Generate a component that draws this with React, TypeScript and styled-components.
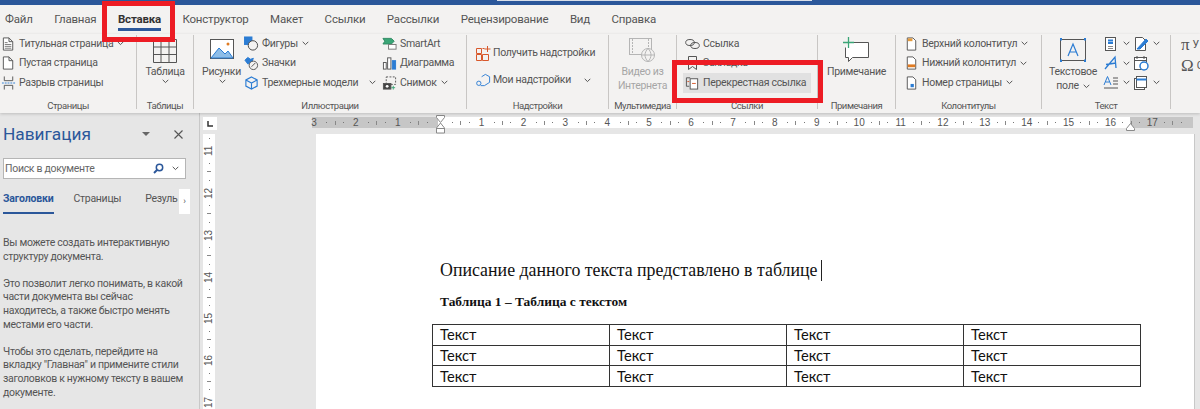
import React from "react";
import styled, { createGlobalStyle } from "styled-components";

const Global = createGlobalStyle`
  html, body { margin: 0; padding: 0; background: #e6e6e6; }
  * { box-sizing: border-box; }
`;

const UI_FONT = `Roboto, "Open Sans", sans-serif`;

const Chevron = () => (
  <ChevronSvg viewBox="0 0 7 5" width="7" height="5">
    <polyline points="0.7,0.8 3.5,3.6 6.3,0.8" fill="none" stroke="#555" strokeWidth="1" />
  </ChevronSvg>
);

type IconProps = { w?: number; h?: number; children: React.ReactNode };
const Icon = ({ w = 16, h = 16, children }: IconProps) => (
  <svg width={w} height={h} viewBox={`0 0 ${w} ${h}`} fill="none" stroke="#555" strokeWidth="1">
    {children}
  </svg>
);

const DocOutline = () => <path d="M2.5 1.5h6l4 4v9h-10z M8.5 1.5v4h4" fill="#fff" />;

const TitlePageIcon = () => (
  <Icon>
    <DocOutline />
    <path d="M4 6.5h3M4 8.5h7M4 10.5h7M4 12.5h7" stroke="#777" />
  </Icon>
);
const BlankPageIcon = () => (
  <Icon>
    <DocOutline />
  </Icon>
);
const PageBreakIcon = () => (
  <Icon>
    <path d="M3.5 1v4.5h9V1M3.5 15v-4.5h9V15" />
    <path d="M1 8h14" stroke="#2b7cd3" strokeDasharray="2 1" />
  </Icon>
);
const ShapesIcon = () => (
  <Icon>
    <rect x="0.5" y="0.5" width="8" height="8" fill="#2b7cd3" stroke="#2b7cd3" />
    <circle cx="9.5" cy="9.5" r="5" fill="#f3f2f1" stroke="#444" />
  </Icon>
);
const SymbolsIcon = () => (
  <Icon>
    <path d="M1 5l3-3 3 2 3-1-2 5-4 1z" fill="#2b7cd3" stroke="#2b7cd3" />
    <circle cx="10" cy="10.5" r="4.5" fill="#f3f2f1" />
    <path d="M8 12l4-4" />
  </Icon>
);
const CubeIcon = () => (
  <Icon>
    <path d="M8 1.5l6 3.2v6.6l-6 3.2-6-3.2V4.700z M2 4.700l6 3.300 6-3.300M8 8v6.500" stroke="#2b7cd3" strokeWidth="1.200" />
  </Icon>
);
const SmartArtIcon = () => (
  <Icon>
    <path d="M1 2h9l3 3-3 3H1l2-3z" fill="#3aa576" stroke="#2f8a62" />
    <rect x="7" y="8.500" width="8" height="5" fill="#fff" stroke="#777" />
  </Icon>
);
const ChartIcon = () => (
  <Icon>
    <rect x="1.500" y="7.500" width="3" height="7" fill="#fff" />
    <rect x="6" y="2.500" width="3.500" height="12" fill="#fff" />
    <rect x="11" y="5.500" width="3.500" height="9" fill="#2b7cd3" stroke="#2b7cd3" />
  </Icon>
);
const ScreenshotIcon = () => (
  <Icon>
    <rect x="4.500" y="1.500" width="10" height="8" strokeDasharray="2 1.500" />
    <rect x="1.500" y="8.500" width="8" height="6" fill="#444" />
    <circle cx="5.500" cy="11.500" r="1.500" fill="#fff" stroke="none" />
    <path d="M12 11v4M10 13h4" stroke="#3aa576" />
  </Icon>
);
const StoreIcon = () => (
  <Icon w={15} h={16}>
    <path d="M.5 3.500h5v5h-5zM.5 9.500h5v6h-5zM6.500 9.500h6v6h-6zM6.500 3.500h2" stroke="#d8582b" />
    <path d="M11.500 1v6M8.500 4h6" stroke="#d8582b" />
  </Icon>
);
const MyAddinsIcon = () => (
  <Icon w={16} h={14}>
    <path d="M6 3.500L10 1l4.500 2.500v6L9 13H5" stroke="#2b7cd3" />
    <circle cx="3" cy="10.500" r="2.300" stroke="#2b7cd3" />
  </Icon>
);
const LinkIcon = () => (
  <Icon w={15} h={12}>
    <ellipse cx="5" cy="4.500" rx="4.300" ry="3" />
    <ellipse cx="10" cy="7.500" rx="4.300" ry="3" />
  </Icon>
);
const BookmarkIcon = () => (
  <Icon w={15} h={16}>
    <path d="M3.500 1.500h8v13l-4-3-4 3z" />
  </Icon>
);
const CrossRefIcon = () => (
  <Icon w={16} h={15}>
    <path d="M5.500 2.500h-4v9h3" />
    <rect x="5.500" y="3.500" width="8" height="11" fill="#fff" />
    <path d="M7.500 8.500h4" stroke="#d8582b" />
    <path d="M2.500 6.500h2" stroke="#d8582b" />
  </Icon>
);
const HeaderIcon = () => (
  <Icon>
    <path d="M3.500 1.500h6l3 3v10h-9z" fill="#fff" />
    <rect x="4" y="2" width="5" height="3" fill="#e59b3c" stroke="none" />
  </Icon>
);
const FooterIcon = () => (
  <Icon>
    <path d="M3.500 1.500h6l3 3v10h-9z" fill="#fff" />
    <rect x="4" y="9.500" width="8" height="3" fill="#e07b22" stroke="none" />
  </Icon>
);
const PageNumberIcon = () => (
  <Icon>
    <path d="M3.500 1.500h6l3 3v10h-9z" fill="#fff" />
    <rect x="7" y="9" width="3.500" height="3.500" fill="#2b7cd3" stroke="none" />
  </Icon>
);
const QuickPartsIcon = () => (
  <Icon>
    <rect x="2.500" y="1.500" width="10" height="13" fill="#fff" />
    <path d="M5 4.500h5M5 7h5" stroke="#2b7cd3" strokeWidth="2" />
    <path d="M5 10.500h5M5 12.500h5" stroke="#888" />
  </Icon>
);
const SignatureIcon = () => (
  <Icon>
    <path d="M2.500 1.500h7l3 3v10h-10z" fill="#fff" />
    <path d="M4 13L13 3l2 2-8 8z" fill="#2b7cd3" stroke="#2b7cd3" />
  </Icon>
);
const WordArtIcon = () => (
  <Icon>
    <path d="M2 14L12 2l1 11M3 9.500l10-1.500" stroke="#2b7cd3" strokeWidth="1.300" />
  </Icon>
);
const DateIcon = () => (
  <Icon>
    <rect x="1.500" y="2.500" width="12" height="12" fill="#fff" />
    <path d="M1.500 5.500h12M4 1v3M11 1v3" />
    <circle cx="11" cy="11" r="4" fill="#fff" stroke="#2b7cd3" strokeWidth="1.500" />
  </Icon>
);
const DropCapIcon = () => (
  <Icon w={16} h={15}>
    <path d="M1 10L4.500 1.500 8 10M2.500 7h4" stroke="#2b7cd3" />
    <path d="M10 3h5M10 6h5M10 9h5M1 13h14" />
  </Icon>
);
const ObjectIcon = () => (
  <Icon>
    <rect x="1.500" y="3.500" width="10" height="11" fill="#fff" />
    <rect x="3.500" y="1.500" width="10" height="11" fill="#fff" />
    <path d="M3.500 4.500h10" stroke="#2b7cd3" strokeWidth="2" />
  </Icon>
);

type Item = { icon?: React.ReactNode; text: string; chevron?: boolean };

const Rows = ({ items }: { items: Item[] }) => (
  <RowStack>
    {items.map((item) => (
      <Row key={item.text}>
        <IconSlot>{item.icon}</IconSlot>
        <RibbonText>{item.text}</RibbonText>
        {item.chevron && <Chevron />}
      </Row>
    ))}
  </RowStack>
);

const tabs = ["Файл", "Главная", "Вставка", "Конструктор", "Макет", "Ссылки", "Рассылки", "Рецензирование", "Вид", "Справка"];
const rulerNumbers = ["3", "2", "1", "", "1", "2", "3", "4", "5", "6", "7", "8", "9", "10", "11", "12", "13", "14", "15", "16", "17", ""];
const sideNumbers = ["10", "11", "12", "13", "14", "15", "16", "17"];
const tableRows = [0, 1, 2];
const tableCols = [0, 1, 2, 3];

export default function App() {
  return (
    <Screen>
      <Global />
      <TitleStrip>
        <SearchEdge />
      </TitleStrip>
      <TabBar>
        {tabs.map((tab) => (
          <Tab key={tab} $active={tab === "Вставка"}>
            {tab}
          </Tab>
        ))}
      </TabBar>
      <Ribbon>
        <Group $width={136}>
          <GroupBody $pad={1}>
            <Rows
              items={[
                { icon: <TitlePageIcon />, text: "Титульная страница", chevron: true },
                { icon: <BlankPageIcon />, text: "Пустая страница" },
                { icon: <PageBreakIcon />, text: "Разрыв страницы" },
              ]}
            />
          </GroupBody>
          <GroupLabel>Страницы</GroupLabel>
        </Group>
        <Sep />
        <Group $width={56}>
          <GroupBody>
            <BigButton>
              <BigIcon>
                <Icon w={24} h={26}>
                  <path d="M.5 2.500h23v23H.5zM.5 10h23M.5 17.500h23M8 2.500v23M16 2.500v23" />
                </Icon>
              </BigIcon>
              <RibbonText>Таблица</RibbonText>
              <Chevron />
            </BigButton>
          </GroupBody>
          <GroupLabel>Таблицы</GroupLabel>
        </Group>
        <Sep />
        <Group $width={272}>
          <GroupBody $pad={6}>
            <BigButton $width={43}>
              <BigIcon>
                <Icon w={24} h={22}>
                  <rect x=".5" y=".5" width="23" height="19" fill="#fff" />
                  <path d="M1 19l8-10 6 6 3-3 5 7z" fill="#8dbde8" stroke="#2b7cd3" />
                  <circle cx="18" cy="5" r="1.500" fill="#e07b22" stroke="none" />
                </Icon>
              </BigIcon>
              <RibbonText>Рисунки</RibbonText>
              <Chevron />
            </BigButton>
            <ColumnGap $width={1} />
            <ShapesColumn>
              <Rows
                items={[
                  { icon: <ShapesIcon />, text: "Фигуры", chevron: true },
                  { icon: <SymbolsIcon />, text: "Значки" },
                  { icon: <CubeIcon />, text: "Трехмерные модели" },
                ]}
              />
              <TrailingChevron>
                <Chevron />
              </TrailingChevron>
            </ShapesColumn>
            <ColumnGap $width={6} />
            <Rows
              items={[
                { icon: <SmartArtIcon />, text: "SmartArt" },
                { icon: <ChartIcon />, text: "Диаграмма" },
                { icon: <ScreenshotIcon />, text: "Снимок", chevron: true },
              ]}
            />
          </GroupBody>
          <GroupLabel>Иллюстрации</GroupLabel>
        </Group>
        <Sep />
        <Group $width={141}>
          <AddinsBody>
            <AddinRow>
              <IconSlot>
                <StoreIcon />
              </IconSlot>
              <RibbonText>Получить надстройки</RibbonText>
            </AddinRow>
            <AddinRow>
              <IconSlot>
                <MyAddinsIcon />
              </IconSlot>
              <RibbonText>Мои надстройки</RibbonText>
              <AddinChevron>
                <Chevron />
              </AddinChevron>
            </AddinRow>
          </AddinsBody>
          <GroupLabel>Надстройки</GroupLabel>
        </Group>
        <Sep />
        <Group $width={67}>
          <GroupBody>
            <BigButton>
              <BigIcon>
                <svg width="26" height="24" viewBox="0 0 26 24" fill="none" stroke="#b5b5b5">
                  <rect x=".5" y=".5" width="22" height="16" />
                  <path d="M3.500 1v15M19.500 1v15" strokeDasharray="2 1" />
                  <circle cx="19" cy="17" r="6.500" fill="#f3f2f1" />
                  <path d="M12.500 17h13M19 10.500c-4 4-4 9 0 13M19 10.500c4 4 4 9 0 13" />
                </svg>
              </BigIcon>
              <MutedText>
                Видео из
                <br />
                Интернета
              </MutedText>
            </BigButton>
          </GroupBody>
          <GroupLabel>Мультимедиа</GroupLabel>
        </Group>
        <Sep />
        <Group $width={140}>
          <GroupBody $pad={8}>
            <RowStack>
              <Row>
                <IconSlot>
                  <LinkIcon />
                </IconSlot>
                <RibbonText>Ссылка</RibbonText>
              </Row>
              <Row>
                <IconSlot>
                  <BookmarkIcon />
                </IconSlot>
                <RibbonText>Закладка</RibbonText>
              </Row>
              <ActiveRow>
                <IconSlot>
                  <CrossRefIcon />
                </IconSlot>
                <RibbonText>Перекрестная ссылка</RibbonText>
              </ActiveRow>
            </RowStack>
          </GroupBody>
          <GroupLabel>Ссылки</GroupLabel>
        </Group>
        <Sep />
        <Group $width={77}>
          <GroupBody>
            <BigButton>
              <BigIcon>
                <Icon w={28} h={26}>
                  <path d="M6.500 5.500h20v15h-16l-4 4v-4h-3v-10" fill="#fff" stroke="#555" />
                  <path d="M1 5.500h11M6.500 0v11" stroke="#3aa576" strokeWidth="1.300" />
                </Icon>
              </BigIcon>
              <RibbonText>Примечание</RibbonText>
            </BigButton>
          </GroupBody>
          <GroupLabel>Примечания</GroupLabel>
        </Group>
        <Sep />
        <Group $width={145}>
          <GroupBody $pad={8}>
            <Rows
              items={[
                { icon: <HeaderIcon />, text: "Верхний колонтитул", chevron: true },
                { icon: <FooterIcon />, text: "Нижний колонтитул", chevron: true },
                { icon: <PageNumberIcon />, text: "Номер страницы", chevron: true },
              ]}
            />
          </GroupBody>
          <GroupLabel>Колонтитулы</GroupLabel>
        </Group>
        <Sep />
        <Group $width={128}>
          <GroupBody $pad={7}>
            <BigButton $width={48}>
              <BigIcon>
                <svg width="28" height="24" viewBox="0 0 28 24" fill="none">
                  <rect x="1.500" y="1.500" width="25" height="21" stroke="#555" />
                  <path d="M1 1h2M25 1h2M1 23h2M25 23h2" stroke="#2b7cd3" strokeWidth="3" />
                  <path d="M9 18L14 6l5 12M11 14h6" stroke="#2b7cd3" strokeWidth="1.200" />
                </svg>
              </BigIcon>
              <RibbonText>Текстовое</RibbonText>
              <Row $tight>
                <RibbonText>поле</RibbonText>
                <Chevron />
              </Row>
            </BigButton>
            <ColumnGap $width={6} />
            <SmallGrid>
              <GridCell><QuickPartsIcon /><Chevron /></GridCell>
              <GridCell><SignatureIcon /><Chevron /></GridCell>
              <GridCell><WordArtIcon /><Chevron /></GridCell>
              <GridCell><DateIcon /></GridCell>
              <GridCell><DropCapIcon /><Chevron /></GridCell>
              <GridCell><ObjectIcon /><Chevron /></GridCell>
            </SmallGrid>
          </GroupBody>
          <GroupLabel>Текст</GroupLabel>
        </Group>
        <Sep />
        <SymbolsGroup>
          <SymbolRow><SymbolGlyph>π</SymbolGlyph><RibbonText>У</RibbonText></SymbolRow>
          <SymbolRow><SymbolGlyph>Ω</SymbolGlyph><RibbonText>С</RibbonText></SymbolRow>
        </SymbolsGroup>
      </Ribbon>

      <Workspace>
        <NavPanel>
          <NavHead>
            <NavTitle>Навигация</NavTitle>
            <NavCaret />
            <NavClose viewBox="0 0 9 9" width="9" height="9">
              <path d="M.5.500l8 8M8.500.500l-8 8" stroke="#555" strokeWidth="1.100" />
            </NavClose>
          </NavHead>
          <SearchBox>
            <SearchHint>Поиск в документе</SearchHint>
            <svg width="11" height="11" viewBox="0 0 11 11" fill="none" stroke="#2b579a" strokeWidth="1.500">
              <circle cx="6.500" cy="4.500" r="3.200" />
              <path d="M4 7l-3 3" strokeWidth="2" />
            </svg>
            <SearchChevron>
              <Chevron />
            </SearchChevron>
          </SearchBox>
          <NavTabs>
            <NavTab $active>Заголовки</NavTab>
            <NavTab>Страницы</NavTab>
            <NavTabClipped>Резуль</NavTabClipped>
            <NavScroll>›</NavScroll>
          </NavTabs>
          <NavCopy>
            <p>Вы можете создать интерактивную структуру документа.</p>
            <p>Это позволит легко понимать, в какой части документа вы сейчас находитесь, а также быстро менять местами его части.</p>
            <p>Чтобы это сделать, перейдите на вкладку "Главная" и примените стили заголовков к нужному тексту в вашем документе.</p>
          </NavCopy>
        </NavPanel>

        <Editor>
          <RulerRow>
            <TabStop>
              <svg width="6" height="6" viewBox="0 0 6 6">
                <path d="M1 0v5h5" fill="none" stroke="#333" strokeWidth="1.500" />
              </svg>
            </TabStop>
            <HRuler>
              {rulerNumbers.map((n, i) => (
                <RulerCell key={i}>
                  <RulerNum>{n}</RulerNum>
                  <Dot />
                  <Tick />
                  <Dot />
                </RulerCell>
              ))}
              <IndentMark viewBox="0 0 9 20" width="9" height="20">
                <path d="M.5.500h8v2l-4 5-4-5zM4.500 8l4 5v5h-8v-5zM.5 13.500h8" fill="#fff" stroke="#8a8a8a" />
              </IndentMark>
              <RightIndent viewBox="0 0 9 8" width="9" height="8">
                <path d="M.5 7.500v-2l4-5 4 5v2z" fill="#fff" stroke="#8a8a8a" />
              </RightIndent>
            </HRuler>
          </RulerRow>
          <EditorBody>
            <VRuler>
              <VRulerInner>
                {sideNumbers.map((n) => (
                  <VRulerCell key={n}>
                    <VRulerNum>{n}</VRulerNum>
                    <Dot />
                    <VTick />
                    <Dot />
                  </VRulerCell>
                ))}
              </VRulerInner>
            </VRuler>
            <Page>
              <Heading>
                Описание данного текста представлено в таблице <Caret />
              </Heading>
              <Caption>Таблица 1 – Таблица с текстом</Caption>
              <DocTable>
                <tbody>
                  {tableRows.map((r) => (
                    <tr key={r}>
                      {tableCols.map((c) => (
                        <DocCell key={c}>Текст</DocCell>
                      ))}
                    </tr>
                  ))}
                </tbody>
              </DocTable>
            </Page>
          </EditorBody>
        </Editor>
      </Workspace>

      <InsertFrame />
      <CrossRefFrame />
    </Screen>
  );
}

const Screen = styled.div`
  position: relative;
  width: 1200px;
  height: 409px;
  overflow: hidden;
  display: flex;
  flex-direction: column;
  background: #e6e6e6;
  font-family: ${UI_FONT};
  color: #444;
`;

const TitleStrip = styled.div`
  height: 5px;
  background: #2b579a;
  padding-left: 497px;
`;

const SearchEdge = styled.div`
  width: 315px;
  height: 1px;
  background: #d9dfe9;
`;

const TabBar = styled.div`
  height: 29px;
  display: flex;
  gap: 21.5px;
  padding: 5px 0 0 5px;
  background: #f3f2f1;
`;

const Tab = styled.div<{ $active?: boolean }>`
  height: 21px;
  font-size: 11.5px;
  line-height: 19px;
  letter-spacing: -0.2px;
  color: ${(p) => (p.$active ? "#333" : "#555")};
  font-weight: ${(p) => (p.$active ? 700 : 400)};
  border-bottom: ${(p) => (p.$active ? "3px solid #2b579a" : "3px solid transparent")};
`;

const Ribbon = styled.div`
  height: 79px;
  display: flex;
  background: #f3f2f1;
  box-shadow: 0 1px 3px rgba(0, 0, 0, 0.18);
  position: relative;
  z-index: 1;
`;

const Group = styled.div<{ $width: number }>`
  width: ${(p) => p.$width}px;
  display: flex;
  flex-direction: column;
`;

const GroupBody = styled.div<{ $pad?: number }>`
  height: 60px;
  display: flex;
  padding-left: ${(p) => p.$pad ?? 0}px;
  justify-content: ${(p) => (p.$pad === undefined ? "center" : "flex-start")};
`;

const AddinsBody = styled.div`
  height: 60px;
  display: flex;
  flex-direction: column;
  padding: 9px 0 0 9px;
  gap: 7px;
`;

const AddinRow = styled.div`
  height: 20px;
  display: flex;
  align-items: center;
  gap: 2px;
`;

const AddinChevron = styled.span`
  display: flex;
  margin-left: 10px;
`;

const GroupLabel = styled.div`
  margin-top: 5px;
  height: 14px;
  font-size: 9.5px;
  letter-spacing: -0.45px;
  line-height: 14px;
  text-align: center;
  color: #555;
`;

const Sep = styled.div`
  width: 1px;
  height: 74px;
  background: #c8c6c4;
  flex-shrink: 0;
  margin-top: 1px;
`;

const RowStack = styled.div`
  display: flex;
  flex-direction: column;
`;

const Row = styled.div<{ $tight?: boolean }>`
  height: ${(p) => (p.$tight ? 14 : 19.6)}px;
  display: flex;
  align-items: center;
  gap: 3px;
  white-space: nowrap;
`;

const ActiveRow = styled(Row)`
  background: #e1e1e1;
  width: 128px;
  margin-left: -2px;
  padding-left: 2px;
`;

const IconSlot = styled.span`
  width: 15px;
  height: 16px;
  flex-shrink: 0;
  display: flex;
  align-items: center;
  justify-content: center;
`;

const RibbonText = styled.span`
  font-size: 10.5px;
  letter-spacing: -0.3px;
  line-height: 14px;
  color: #555;
  white-space: nowrap;
`;

const MutedText = styled(RibbonText)`
  color: #a6a6a6;
  text-align: center;
`;

const ChevronSvg = styled.svg`
  flex-shrink: 0;
  margin-left: 1px;
`;

const BigButton = styled.div<{ $width?: number }>`
  width: ${(p) => (p.$width ? `${p.$width}px` : "auto")};
  display: flex;
  flex-direction: column;
  align-items: center;
`;

const BigIcon = styled.div`
  height: 31px;
  display: flex;
  align-items: center;
  justify-content: center;
`;

const ColumnGap = styled.div<{ $width: number }>`
  width: ${(p) => p.$width}px;
  flex-shrink: 0;
`;

const ShapesColumn = styled.div`
  display: flex;
  justify-content: space-between;
  width: 132px;
`;

const TrailingChevron = styled.div`
  display: flex;
  margin: 46px 0 0 4px;
  height: 8px;
`;

const SmallGrid = styled.div`
  display: grid;
  grid-template-columns: 30px 30px;
  grid-auto-rows: 19.6px;
`;

const GridCell = styled.div`
  display: flex;
  align-items: center;
  gap: 3px;
`;

const SymbolsGroup = styled.div`
  display: flex;
  flex-direction: column;
  padding: 0 0 0 10px;
  overflow: hidden;
  flex: 1;
`;

const SymbolRow = styled.div`
  height: 21px;
  display: flex;
  align-items: center;
  gap: 3px;
`;

const SymbolGlyph = styled.span`
  font-family: "Liberation Serif", serif;
  font-size: 17px;
  line-height: 20px;
  color: #555;
`;

const Workspace = styled.div`
  flex: 1;
  display: flex;
  min-height: 0;
`;

const NavPanel = styled.aside`
  width: 200px;
  flex-shrink: 0;
  border-right: 1px solid #c8c8c8;
  padding: 0 0 0 3px;
  overflow: hidden;
`;

const NavHead = styled.div`
  height: 40px;
  display: flex;
  align-items: center;
  padding-top: 2px;
`;

const NavTitle = styled.div`
  font-size: 17.3px;
  line-height: 24px;
  color: #2b579a;
  width: 139px;
`;

const NavCaret = styled.div`
  width: 0;
  height: 0;
  border-left: 4px solid transparent;
  border-right: 4px solid transparent;
  border-top: 4px solid #666;
  margin-right: 24px;
`;

const NavClose = styled.svg`
  flex-shrink: 0;
`;

const SearchBox = styled.div`
  margin-top: 5px;
  width: 183px;
  height: 21px;
  background: #fff;
  border: 1px solid #b5b5b5;
  display: flex;
  align-items: center;
  padding: 0 6px 0 1px;
`;

const SearchHint = styled.span`
  flex: 1;
  font-size: 10.5px;
  letter-spacing: -0.3px;
  color: #666;
`;

const SearchChevron = styled.span`
  display: flex;
  margin-left: 7px;
`;

const NavTabs = styled.div`
  position: relative;
  margin-top: 10px;
  height: 26px;
  display: flex;
  gap: 20px;
`;

const NavTab = styled.div<{ $active?: boolean }>`
  height: 25px;
  font-size: 10.5px;
  line-height: 20px;
  letter-spacing: ${(p) => (p.$active ? "-0.15px" : "-0.3px")};
  color: ${(p) => (p.$active ? "#2b579a" : "#555")};
  font-weight: ${(p) => (p.$active ? 700 : 400)};
  border-bottom: ${(p) => (p.$active ? "2.5px solid #2b579a" : "none")};
`;

const NavTabClipped = styled(NavTab)`
  margin-left: 4px;
  white-space: nowrap;
`;

const NavScroll = styled.div`
  position: absolute;
  left: 176px;
  top: 0;
  width: 11px;
  height: 25px;
  background: #fff;
  font-size: 9px;
  line-height: 25px;
  text-align: center;
  color: #555;
`;

const NavCopy = styled.div`
  margin-top: 21px;
  width: 186px;
  font-size: 10.5px;
  letter-spacing: -0.3px;
  line-height: 13.6px;
  color: #555;
  p {
    margin: 0 0 13.6px;
  }
`;

const Editor = styled.div`
  flex: 1;
  display: flex;
  flex-direction: column;
  min-width: 0;
`;

const RulerRow = styled.div`
  height: 21px;
  display: flex;
  padding-left: 3px;
  align-items: flex-start;
  padding-top: 4px;
`;

const TabStop = styled.div`
  width: 14px;
  height: 13px;
  background: #fff;
  display: flex;
  align-items: center;
  justify-content: center;
`;

const HRuler = styled.div`
  position: relative;
  margin-left: 95px;
  width: 881px;
  height: 11px;
  display: flex;
  background: linear-gradient(
    to right,
    #c6c6c6 0,
    #c6c6c6 126px,
    #fff 126px,
    #fff 818px,
    #c6c6c6 818px
  );
`;

const RulerCell = styled.div`
  width: 41.9px;
  flex-shrink: 0;
  display: flex;
  align-items: center;
  justify-content: space-between;
  padding-right: 7px;
  &:first-child {
    margin-left: -3px;
  }
`;

const RulerNum = styled.span`
  width: 10px;
  text-align: center;
  font-family: "Liberation Sans", sans-serif;
  font-size: 10px;
  line-height: 11px;
  color: #555;
`;

const Dot = styled.i`
  width: 1px;
  height: 1px;
  background: #777;
`;

const Tick = styled.i`
  width: 1px;
  height: 4px;
  background: #888;
`;

const VTick = styled.i`
  width: 4px;
  height: 1px;
  background: #888;
`;

const IndentMark = styled.svg`
  position: absolute;
  left: 124px;
  top: -2px;
`;

const RightIndent = styled.svg`
  position: absolute;
  left: 814px;
  top: 6px;
`;

const EditorBody = styled.div`
  flex: 1;
  display: flex;
  min-height: 0;
`;

const VRuler = styled.div`
  margin-left: 3px;
  width: 12px;
  background: #fff;
  overflow: hidden;
  flex-shrink: 0;
`;

const VRulerInner = styled.div`
  margin-top: -30px;
  display: flex;
  flex-direction: column;
`;

const VRulerCell = styled.div`
  height: 41.9px;
  flex-shrink: 0;
  display: flex;
  flex-direction: column;
  align-items: center;
  justify-content: space-between;
  padding-bottom: 7px;
`;

const VRulerNum = styled.span`
  height: 10px;
  writing-mode: vertical-rl;
  transform: rotate(180deg);
  font-family: "Liberation Sans", sans-serif;
  font-size: 10px;
  line-height: 12px;
  color: #555;
  display: flex;
  align-items: center;
  justify-content: center;
`;

const Page = styled.main`
  margin-left: 101px;
  width: 878px;
  background: #fff;
  box-shadow: 1px 0 0 #c8c8c8;
  padding: 124px 0 0 124px;
  flex-shrink: 0;
`;

const Heading = styled.div`
  font-family: "Liberation Serif", serif;
  font-size: 17.85px;
  line-height: 24px;
  color: #111;
  white-space: nowrap;
  display: flex;
  align-items: center;
  gap: 4px;
`;

const Caret = styled.span`
  width: 1px;
  height: 21px;
  background: #222;
`;

const Caption = styled.div`
  margin-top: 12px;
  font-family: "Liberation Serif", serif;
  font-weight: 700;
  font-size: 13.45px;
  line-height: 16px;
  color: #111;
`;

const DocTable = styled.table`
  margin: 14px 0 0 -8px;
  width: 709px;
  border-collapse: collapse;
  table-layout: fixed;
`;

const DocCell = styled.td`
  height: 20.7px;
  padding: 0 0 0 7px;
  border: 1px solid #333;
  font-family: "Lato", "Noto Sans", sans-serif;
  font-size: 14.7px;
  line-height: 19px;
  color: #111;
`;

const InsertFrame = styled.div`
  position: absolute;
  left: 102px;
  top: 1px;
  width: 73px;
  height: 41px;
  border: 5.5px solid #ed1c24;
  z-index: 2;
`;

const CrossRefFrame = styled.div`
  position: absolute;
  left: 672px;
  top: 60px;
  width: 151px;
  height: 43px;
  border: 5.5px solid #ed1c24;
  z-index: 2;
`;
